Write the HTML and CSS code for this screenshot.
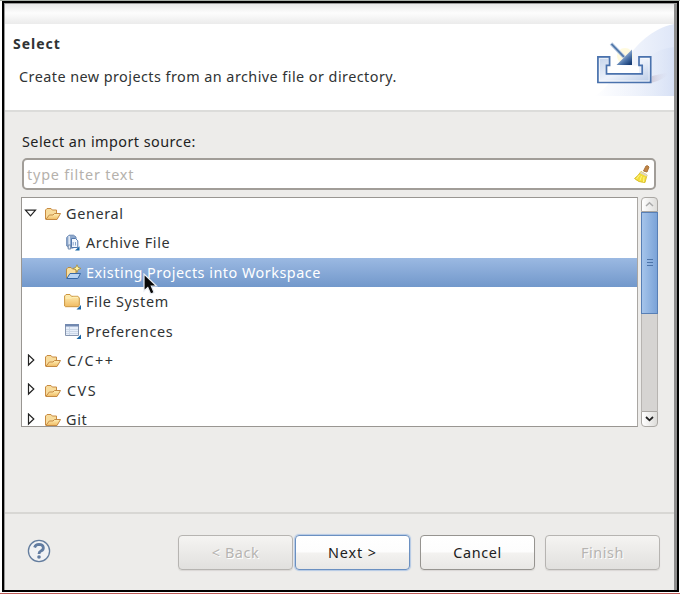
FILE: index.html
```html
<!DOCTYPE html>
<html lang="en">
<head>
<meta charset="utf-8">
<title>Import</title>
<link rel="stylesheet" href="styles.css">
</head>
<body>
<svg width="0" height="0" class="defs" aria-hidden="true">
  <defs>
    <linearGradient id="gold" x2="0" y2="1"><stop stop-color="#fff0b8"/><stop offset="1" stop-color="#f0bb62"/></linearGradient>
    <linearGradient id="tray" x2="1" y2="1"><stop stop-color="#c3d3ea"/><stop offset=".5" stop-color="#edf2fb"/><stop offset="1" stop-color="#b9cbe6"/></linearGradient>
    <linearGradient id="head" x1=".3" y1=".4" x2=".8" y2="1"><stop stop-color="#a9bfdd"/><stop offset=".55" stop-color="#4a72a8"/><stop offset="1" stop-color="#173c74"/></linearGradient>
    <linearGradient id="sweep" x2="1" y2="0"><stop stop-color="#fff"/><stop offset="1" stop-color="#dfe7f8"/></linearGradient>
    <linearGradient id="sweep2" x2="1" y2="0"><stop stop-color="#fff" stop-opacity="0"/><stop offset="1" stop-color="#d3def4"/></linearGradient>
    <linearGradient id="shade" x2="1" y2="0"><stop stop-color="#c6bccc"/><stop offset="1" stop-color="#dbe0f2" stop-opacity="0"/></linearGradient>
    <symbol id="folder" viewBox="0 0 18 14">
      <path d="M1.5 12V3L3 1.5h4L8.3 3h4.2v3.5" fill="#f8dc9c" stroke="#c88b42"/>
      <path d="M1.8 12.5 5.3 8H9l1.5-1.5h6L13 12.5Z" fill="url(#gold)" stroke="#c58a42"/>
    </symbol>
  </defs>
</svg>
<div class="window">
  <div class="titlebar"></div>
  <header class="banner">
    <div>
      <h1>Select</h1>
      <p>Create new projects from an archive file or directory.</p>
    </div>
    <svg class="art" width="80" height="72" viewBox="0 0 80 72">
      <path d="M0 72C24 62 34 10 80 0V72Z" fill="url(#sweep)"/>
      <path d="M18 72C37 60 46 26 80 23V72Z" fill="url(#sweep2)" opacity=".65"/>
      <path d="M57 59 58 52 76 48Q70 56 57 59Z" fill="url(#shade)" opacity=".7"/>
      <circle cx="31" cy="32" r="8" fill="#fff7c8" opacity=".6"/>
      <path d="M12.5 41.5H45V50H12.5Z" fill="#fff"/>
      <path d="M3.9 32.9H15.6V41.4H12.5V49.8H48.2V41.4H45V32.9H56.7V58.5H3.9Z" fill="url(#tray)" stroke="#4a72ad" stroke-width="1.7"/>
      <path d="M5.5 34.5H14M5.5 34.5V56.9H55.1V34.5H46.6" fill="none" stroke="#fff" stroke-width=".8" opacity=".7"/>
      <path d="M17 19.5 30 33" stroke="#b4c6df" stroke-width="3.4"/>
      <path d="M17.5 20 30 33" stroke="#4f76a8" stroke-width="1.8"/>
      <path d="M38 25.5V41H22.5Z" fill="url(#head)"/>
    </svg>
  </header>
  <main>
    <label class="caption" for="filter">Select an import source:</label>
    <div class="filter" id="filter">
      <span>type filter text</span>
      <svg width="18" height="20" viewBox="0 0 18 20">
        <path d="m10.5 7 2.5-5q2-1 3 1L14 8Z" fill="#c18445" stroke="#a9743c"/>
        <path d="M8 7.5Q5 12 1.5 14.5 5 18.5 12 18.5L14 11Z" fill="#f3dd38" stroke="#dcc232"/>
        <path d="m7.5 8.3 6.5 3.4" stroke="#ddd5c8" stroke-width="2"/>
        <path d="m6.5 11-3 4m5-3-1.5 4.5m4-3.5-.5 5" stroke="#fff48a"/>
      </svg>
    </div>
    <div class="listing">
      <ul class="tree">
        <li><svg class="twist open" width="13" height="9" viewBox="0 0 13 9"><path d="M1.5 1.2H11.5L6.5 6.9Z" fill="#fff" stroke="#222" stroke-width="1.2"/></svg><svg class="folder" width="18" height="14"><use href="#folder"/></svg><span>General</span></li>
        <li class="child"><svg width="18" height="18" viewBox="0 0 18 18">
          <path d="M2.7 12V3.5L5 1.2h4.5L12 3v9L9 14H5Z" fill="#8fa9cd" stroke="#6c8ab5"/>
          <path d="M7.5 4.5h4l2.3 2.3v6.7H7.5Z" fill="#f2f7fd" stroke="#5479ad"/>
          <path d="M9.2 8v3.5M11.5 8v3.5" stroke="#8aa6cc"/>
          <path d="M5.2 2v9" stroke="#dfe8f3" stroke-width="1.6"/>
          <path d="M4.2 11h2.5v4H4.2Z" fill="#e6ecf5" stroke="#718aac"/><path d="M15.5 12.3V16.5h-4.5Z" fill="#1765a5"/>
        </svg><span>Archive File</span></li>
        <li class="child selected"><svg width="18" height="18" viewBox="0 0 18 18">
          <path d="M2.5 14V5L4 3.5h3L8.5 5H12v4" fill="#f8dfa0" stroke="#b88d46"/>
          <path d="M2.8 14.5 6 9.5H16.5L13.8 14.5Z" fill="#b7d3f3" stroke="#3568a6"/>
          <path d="m13 .8 1.1 2.5 2.8 1.1-2.8 1.2L13 8.3l-1.1-2.7-2.7-1.2 2.7-1.1Z" fill="#fff6a6" stroke="#a88b37" stroke-width=".8"/>
        </svg><span>Existing Projects into Workspace</span></li>
        <li class="child"><svg width="18" height="18" viewBox="0 0 18 18">
          <path d="M.6 13V3L2 1.5h4L7.5 3.3H14L15.3 5v7.5l-1.2 1.2H1.5Z" fill="url(#gold)" stroke="#cc963f"/><path d="M1.5 5h6L9 4.3h5" fill="none" stroke="#fff1b7"/>
          <path d="M17 12v4.5h-4.5Z" fill="#1765a5"/>
        </svg><span>File System</span></li>
        <li class="child"><svg width="18" height="18" viewBox="0 0 18 18">
          <path d="M1.5 1.5h13v11h-13Z" fill="#e6eefa" stroke="#8594ae"/><path d="M1 1h14v2.5H1Z" fill="#7289b0"/><path d="M2 6.5h12M2 8.5h12M2 10.5h12M5.5 4v8" stroke="#cbd7e7"/>
          <path d="M17 11.5V16h-4.5Z" fill="#1765a5"/>
        </svg><span>Preferences</span></li>
        <li><svg class="twist" width="13" height="15" viewBox="0 0 13 15"><path d="M4.5 1V11L9.8 6Z" fill="#fff" stroke="#222" stroke-width="1.2"/></svg><svg class="folder" width="18" height="14"><use href="#folder"/></svg><span class="cpp">C/C++</span></li>
        <li><svg class="twist" width="13" height="15" viewBox="0 0 13 15"><path d="M4.5 1V11L9.8 6Z" fill="#fff" stroke="#222" stroke-width="1.2"/></svg><svg class="folder" width="18" height="14"><use href="#folder"/></svg><span class="cvs">CVS</span></li>
        <li><svg class="twist" width="13" height="15" viewBox="0 0 13 15"><path d="M4.5 1V11L9.8 6Z" fill="#fff" stroke="#222" stroke-width="1.2"/></svg><svg class="folder" width="18" height="14"><use href="#folder"/></svg><span>Git</span></li>
      </ul>
      <div class="scroll">
        <div class="arrow up"><svg width="9" height="6" viewBox="0 0 9 6"><path d="m1 5 3.5-3.3L8 5" fill="none" stroke="#aaa" stroke-width="1.5"/></svg></div>
        <div class="thumb"><i></i><i></i><i></i></div>
        <div class="track"></div>
        <div class="arrow down"><svg width="9" height="6" viewBox="0 0 9 6"><path d="m1 1 3.5 3.3L8 1" fill="none" stroke="#222" stroke-width="1.8"/></svg></div>
      </div>
    </div>
  </main>
  <footer>
    <svg class="help" width="24" height="24" viewBox="0 0 24 24"><circle cx="12" cy="12" r="10.6" fill="#f1f2f4" stroke="#647d9e" stroke-width="1.3"/><path d="M7.6 8.5Q8.5 5.5 12 5.4c5.4 0 5.4 5.1 1.9 6.6Q12 12.8 12 15" fill="none" stroke="#627ca1" stroke-width="2.8"/><circle cx="12" cy="18" r="1.8" fill="#627ca1"/></svg>
    <button class="off" disabled>&lt; Back</button>
    <button class="default">Next &gt;</button>
    <button class="cancel">Cancel</button>
    <button class="off" disabled>Finish</button>
  </footer>
</div>
<svg class="pointer" width="18" height="24" viewBox="0 0 18 24"><path d="M2 1V18l3.8-3.6L8.7 21l3.4-1.4L9.3 13h5.2Z" fill="#080808" stroke="#e9edf3" stroke-width="1.2"/></svg>
</body>
</html>
```

FILE: styles.css
```css
* { box-sizing: border-box; }
body {
  margin: 0; width: 680px; height: 594px; padding: 1px 1px 1px 2px;
  overflow: hidden; background: #fff; border-bottom: 1px solid #bd5b57;
  box-shadow: inset 0 1px #a9b0a9;
  font: 14.4px/20px "Noto Sans", "Open Sans", sans-serif; color: #303334;
}
.defs, .pointer { position: absolute; }
.window {
  width: 677px; height: 591px; border: 2px solid #000; background: #edecea;
  box-shadow: inset 1px 1px #999, inset -3px 0 #8d8d8d;
  display: flex; flex-direction: column; padding: 1px 3px 0 1px;
}
.titlebar { height: 20px; background: linear-gradient(#e8e8e8, #fdfdfd 45%, #ebebeb); }
.banner {
  height: 88px; background: #fff; border-bottom: 2px solid #dcdcda;
  display: flex; justify-content: space-between;
}
h1 { margin: 10px 0 0 8px; font-size: 14px; line-height: 20px; font-weight: 700; letter-spacing: 1px; }
.banner p { margin: 13px 0 0 14px; white-space: nowrap; letter-spacing: .45px; }
.art { display: block; }
main { height: 401px; padding: 20px 16px 0; }
.caption { display: block; height: 26px; padding-left: 1px; color: #222; letter-spacing: .45px; }
.filter {
  width: 634px; height: 32px; margin-left: 1px; border: 2px solid #a19d98; border-radius: 5px;
  background: #fff; display: flex; align-items: center; justify-content: space-between;
  padding: 0 3px; color: #b5b1ac;
}
.filter span { padding-top: 2px; letter-spacing: .8px; }
.listing { display: flex; gap: 3px; margin-top: 7px; height: 230px; }
.tree {
  list-style: none; width: 617px; height: 230px; margin: 0; padding: 1px 0 0;
  overflow: hidden; background: #fff; border: 1px solid #999692; border-right-color: #aaa7a3;
}
.tree li { height: 29.5px; display: flex; align-items: center; padding-left: 2px; white-space: nowrap; letter-spacing: .65px; }
.twist { margin-right: 7px; }
.folder { margin-right: 4px; }
.tree li.child { padding-left: 42px; }
.child svg { margin-right: 4px; }
.tree li.selected { background: linear-gradient(#9bb9e2, #7298cb); color: #fff; letter-spacing: .5px; }
.tree .cpp, .tree .cvs { margin-left: 1px; letter-spacing: 1.5px; }
.scroll { width: 17px; height: 230px; display: flex; flex-direction: column; }
.arrow { height: 15px; border: 1px solid #aaa7a3; background: linear-gradient(90deg,#fff,#deddda); display: flex; align-items: center; justify-content: center; }
.up { border-radius: 4px 4px 0 0; }
.down { height: 16px; border-radius: 0 0 4px 4px; }
.thumb { height: 102px; border: 1px solid #587fb5; background: linear-gradient(90deg,#a5c4ea,#7ba3d8); display: flex; flex-direction: column; align-items: center; justify-content: center; gap: 2px; }
.thumb i { width: 6px; height: 1px; background: #4d74a9; }
.track { flex: 1; background: #d6d4d2; border: solid #b7b4b1; border-width: 0 1px; }
footer { height: 78px; border-top: 2px solid #d8d7d4; display: flex; padding: 21px 14px 0 22px; }
.help { margin: 4px 127px 0 0; }
button {
  width: 115px; height: 35px; padding: 0; border: 1px solid #969490; border-radius: 4px;
  background: linear-gradient(#fff,#fdfdfd 48%,#f3f2f0 52%,#e9e8e6);
  box-shadow: 0 1px 1px #dad8d5; color: #202020; font: inherit; letter-spacing: .6px;
}
.off { color: #b6b4b1; border-color: #b6b4b1; background: linear-gradient(#f5f4f2,#e1e0de); text-shadow: 1px 1px #fff; }
.default { border-color: #6b90c1; box-shadow: 0 0 1px 1px #b3c9e5; margin-left: 2px; letter-spacing: .9px; }
.cancel { margin: 0 10px; }
.pointer { left: 142px; top: 273px; }
```
